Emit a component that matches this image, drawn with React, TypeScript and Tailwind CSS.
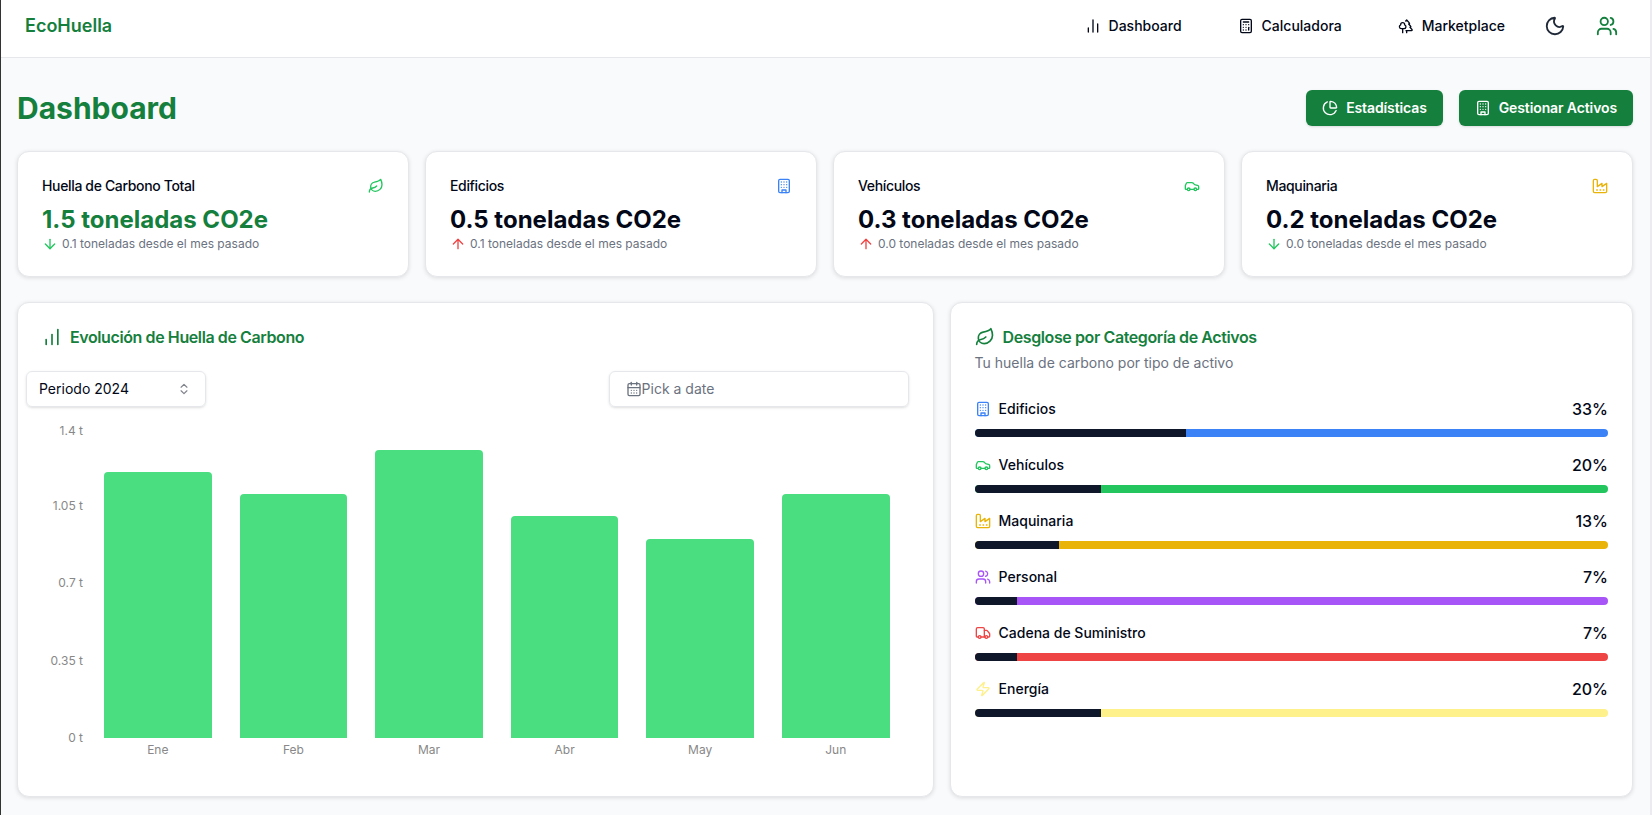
import {
  ArrowDown,
  ArrowUp,
  Calculator,
  CalendarDays,
  Car,
  ChartNoAxesColumn,
  ChartNoAxesColumnIncreasing,
  ChevronsUpDown,
  Leaf,
  Moon,
  PieChart,
  Trees,
  Truck,
  Users,
  Zap,
} from 'lucide-react';
import type { ReactNode } from 'react';

function BuildingIcon({ className }: { className: string }) {
  return (
    <svg viewBox="0 0 24 24" fill="none" stroke="currentColor" strokeWidth="2" strokeLinecap="round" strokeLinejoin="round" className={className}>
      <rect x="4" y="2" width="16" height="20" rx="2" />
      <path d="M9 22v-4h6v4" />
      <path d="M8 6h.01M16 6h.01M12 6h.01M12 10h.01M12 14h.01M16 10h.01M16 14h.01M8 10h.01M8 14h.01" />
    </svg>
  );
}

function FactoryIcon({ className }: { className: string }) {
  return (
    <svg viewBox="0 0 24 24" fill="none" stroke="currentColor" strokeWidth="2" strokeLinecap="round" strokeLinejoin="round" className={className}>
      <path d="M2 20a2 2 0 0 0 2 2h16a2 2 0 0 0 2-2V8l-7 5V8l-7 5V4a2 2 0 0 0-2-2H4a2 2 0 0 0-2 2Z" />
      <path d="M17 18h1M12 18h1M7 18h1" />
    </svg>
  );
}

const navLinks = [
  { label: 'Dashboard', icon: <ChartNoAxesColumn className="h-4 w-4" /> },
  { label: 'Calculadora', icon: <Calculator className="h-4 w-4" /> },
  { label: 'Marketplace', icon: <Trees className="h-4 w-4" /> },
];

const stats = [
  {
    title: 'Huella de Carbono Total',
    value: '1.5 toneladas CO2e',
    delta: '0.1 toneladas desde el mes pasado',
    up: false,
    accent: true,
    icon: <Leaf className="h-4 w-4 text-[#22c55e]" />,
  },
  {
    title: 'Edificios',
    value: '0.5 toneladas CO2e',
    delta: '0.1 toneladas desde el mes pasado',
    up: true,
    accent: false,
    icon: <BuildingIcon className="h-4 w-4 text-[#3b82f6]" />,
  },
  {
    title: 'Vehículos',
    value: '0.3 toneladas CO2e',
    delta: '0.0 toneladas desde el mes pasado',
    up: true,
    accent: false,
    icon: <Car className="h-4 w-4 text-[#22c55e]" />,
  },
  {
    title: 'Maquinaria',
    value: '0.2 toneladas CO2e',
    delta: '0.0 toneladas desde el mes pasado',
    up: false,
    accent: false,
    icon: <FactoryIcon className="h-4 w-4 text-[#eab308]" />,
  },
];

const bars = [
  { month: 'Ene', height: 266 },
  { month: 'Feb', height: 244 },
  { month: 'Mar', height: 288 },
  { month: 'Abr', height: 222 },
  { month: 'May', height: 199 },
  { month: 'Jun', height: 244 },
];

const ticks = ['1.05 t', '0.7 t', '0.35 t', '0 t'];

// pct is the bar width, label is what gets printed next to it
const categories = [
  { name: 'Edificios', pct: 33.33, label: '33%', track: 'bg-[#3b82f6]', icon: <BuildingIcon className="h-4 w-4 text-[#3b82f6]" /> },
  { name: 'Vehículos', pct: 20, label: '20%', track: 'bg-[#22c55e]', icon: <Car className="h-4 w-4 text-[#22c55e]" /> },
  { name: 'Maquinaria', pct: 13.33, label: '13%', track: 'bg-[#eab308]', icon: <FactoryIcon className="h-4 w-4 text-[#eab308]" /> },
  { name: 'Personal', pct: 6.67, label: '7%', track: 'bg-[#a855f7]', icon: <Users className="h-4 w-4 text-[#a855f7]" /> },
  { name: 'Cadena de Suministro', pct: 6.67, label: '7%', track: 'bg-[#ef4444]', icon: <Truck className="h-4 w-4 text-[#ef4444]" /> },
  { name: 'Energía', pct: 20, label: '20%', track: 'bg-[#fef08a]', icon: <Zap className="h-4 w-4 text-[#fef08a]" /> },
];

function Card({ children, className = '' }: { children: ReactNode; className?: string }) {
  return (
    <div className={`rounded-xl border border-[#e5e7eb] bg-white shadow-[0_1px_4px_rgba(0,0,0,0.12)] ${className}`}>
      {children}
    </div>
  );
}

function GreenButton({ icon, label }: { icon: ReactNode; label: string }) {
  return (
    <button className="flex h-9 items-center gap-2 rounded-md bg-[#15803d] px-4 text-sm font-semibold tracking-[-0.008em] text-white shadow-sm">
      {icon}
      {label}
    </button>
  );
}

export default function App() {
  return (
    <div className="min-h-[815px] border-l border-[#333333] border-r-2 border-r-[#ececf0] bg-[#f9fafb] font-['Inter',sans-serif] text-[#020817]">
      <nav className="flex h-[58px] items-center border-b border-[#e5e7eb] bg-white pr-[23px] pb-[5px] pl-6">
        <span className="text-lg font-semibold text-[#15803d]">EcoHuella</span>
        <div className="ml-auto flex items-center">
          <div className="mr-[14px] flex items-center gap-6">
            {navLinks.map((link) => (
              <a key={link.label} className="flex h-10 items-center gap-2 px-4 text-sm font-medium text-[#020817]">
                {link.icon}
                {link.label}
              </a>
            ))}
          </div>
          <button className="flex h-10 w-10 items-center justify-center text-[#1f2937]">
            <Moon className="h-[22px] w-[22px]" />
          </button>
          <button className="ml-3 flex h-10 w-10 items-center justify-center text-[#15803d]">
            <Users className="h-[22px] w-[22px]" />
          </button>
        </div>
      </nav>

      <main className="pt-8 pr-[17px] pb-[18px] pl-4">
        <div className="mb-[25px] flex items-center justify-between">
          <h1 className="text-3xl font-bold text-[#15803d]">Dashboard</h1>
          <div className="flex gap-4">
            <GreenButton icon={<PieChart className="h-4 w-4" />} label="Estadísticas" />
            <GreenButton icon={<BuildingIcon className="h-4 w-4" />} label="Gestionar Activos" />
          </div>
        </div>

        <div className="mb-[25px] grid grid-cols-4 gap-4">
          {stats.map((stat) => (
            <Card key={stat.title} className="p-6">
              <div className="flex items-center justify-between pb-2">
                <span className="text-sm font-medium tracking-tight">{stat.title}</span>
                {stat.icon}
              </div>
              <div className={`text-2xl font-bold ${stat.accent ? 'text-[#15803d]' : ''}`}>{stat.value}</div>
              <div className="flex items-center text-xs text-[#6b7280]">
                {stat.up ? (
                  <ArrowUp className="mr-1 h-4 w-4 text-[#ef4444]" />
                ) : (
                  <ArrowDown className="mr-1 h-4 w-4 text-[#22c55e]" />
                )}
                {stat.delta}
              </div>
            </Card>
          ))}
        </div>

        <div className="grid h-[495px] grid-cols-7 gap-4">
          <Card className="col-span-4">
            <div className="flex items-center gap-2 p-6 text-base leading-none font-semibold tracking-tight text-[#15803d]">
              <ChartNoAxesColumnIncreasing className="h-5 w-5" />
              Evolución de Huella de Carbono
            </div>
            <div className="pr-6 pl-2">
              <div className="flex items-center justify-between">
                <div className="flex h-9 w-[180px] items-center justify-between rounded-md border border-[#e5e7eb] px-3 text-sm shadow-sm">
                  Periodo 2024
                  <ChevronsUpDown className="mr-0.5 h-3.5 w-3.5 opacity-50" />
                </div>
                <div className="flex h-9 w-[300px] items-center rounded-md border border-[#e5e7eb] px-4 text-sm text-[#6b7280] shadow-sm">
                  <CalendarDays className="h-4 w-4 shrink-0" />
                  Pick a date
                </div>
              </div>
              <div className="mt-4 flex items-start">
                <div className="flex w-[57px] flex-col text-right text-xs leading-4 text-[#888888]">
                  <span className="mb-[59px]">1.4 t</span>
                  <div className="flex flex-col gap-[61.3px]">
                    {ticks.map((tick) => (
                      <span key={tick}>{tick}</span>
                    ))}
                  </div>
                </div>
                <div className="ml-2 flex-1 pr-[19px] pl-[13px]">
                  <div className="flex h-[315px] items-end gap-[28px]">
                    {bars.map((bar) => (
                      <div
                        key={bar.month}
                        className="flex-1 rounded-t-[4px] bg-[#4ade80]"
                        style={{ height: bar.height }}
                      />
                    ))}
                  </div>
                  <div className="mt-1 flex gap-[28px] text-xs leading-4 text-[#888888]">
                    {bars.map((bar) => (
                      <span key={bar.month} className="flex-1 text-center">
                        {bar.month}
                      </span>
                    ))}
                  </div>
                </div>
              </div>
            </div>
          </Card>

          <Card className="col-span-3 p-6">
            <div className="flex items-center gap-2 text-base leading-none font-semibold tracking-tight text-[#15803d]">
              <Leaf className="h-5 w-5" />
              Desglose por Categoría de Activos
            </div>
            <p className="mt-1.5 text-sm text-[#6b7280]">Tu huella de carbono por tipo de activo</p>
            <div className="mt-6 space-y-4">
              {categories.map((cat) => (
                <div key={cat.name}>
                  <div className="mb-2 flex items-center justify-between">
                    <div className="flex items-center gap-2 text-sm font-medium">
                      {cat.icon}
                      {cat.name}
                    </div>
                    <span className="text-base font-medium">{cat.label}</span>
                  </div>
                  <div className={`h-2 overflow-hidden rounded-full ${cat.track}`}>
                    <div className="h-full bg-[#0f172a]" style={{ width: `${cat.pct}%` }} />
                  </div>
                </div>
              ))}
            </div>
          </Card>
        </div>
      </main>
    </div>
  );
}
